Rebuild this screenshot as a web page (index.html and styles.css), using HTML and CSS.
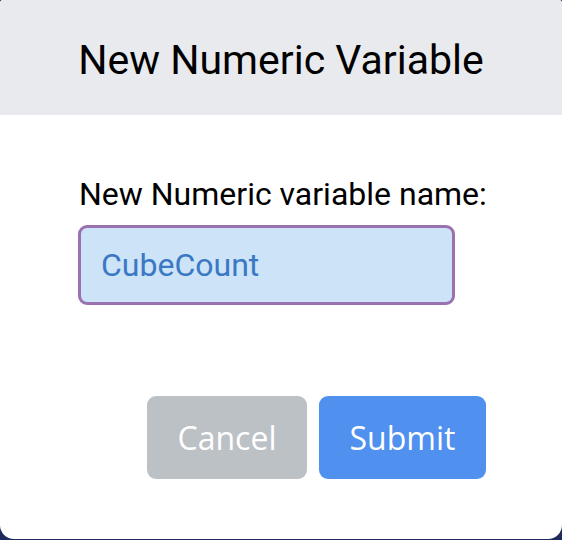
FILE: index.html
```html
<!DOCTYPE html>
<html>
<head>
<meta charset="utf-8">
<link rel="stylesheet" href="styles.css">
</head>
<body>
<div class="dialog">
  <div class="header"><h1 class="title">New Numeric Variable</h1></div>
  <div class="content">
    <label class="label" for="name">New Numeric variable name:</label>
    <input class="field" id="name" type="text" value="CubeCount">
    <div class="actions">
      <button class="btn btn-cancel">Cancel</button>
      <button class="btn btn-submit">Submit</button>
    </div>
  </div>
</div>
</body>
</html>
```

FILE: styles.css
```css
html, body {
  margin: 0;
  padding: 0;
  background: #1f2a5c;
  width: 562px;
  height: 540px;
  overflow: hidden;
}
.dialog {
  width: 562px;
  height: 539px;
  background: #ffffff;
  border-radius: 3px 3px 14px 14px;
  overflow: hidden;
  display: flex;
  flex-direction: column;
}
.header {
  height: 115px;
  background: #e9eaee;
  display: flex;
  align-items: center;
  justify-content: center;
}
.title {
  margin: 0;
  font-family: Roboto, "Liberation Sans", sans-serif;
  font-weight: 400;
  font-size: 41px;
  color: #000;
  padding-top: 4px;
}
.content {
  display: flex;
  flex-direction: column;
  padding: 59px 76px 0 78px;
}
.label {
  font-family: Roboto, "Liberation Sans", sans-serif;
  font-size: 32px;
  line-height: 40px;
  color: #000;
  padding-left: 1px;
  white-space: nowrap;
}
.field {
  margin-top: 11px;
  width: 377px;
  height: 80px;
  box-sizing: border-box;
  border: 3px solid #9b72b0;
  border-radius: 9px;
  background: #cce3f8;
  color: #3a78c4;
  font-family: Roboto, "Liberation Sans", sans-serif;
  font-size: 32px;
  padding: 0 0 0 20px;
  outline: none;
}
.actions {
  margin-top: 91px;
  display: flex;
  justify-content: flex-end;
  gap: 12px;
}
.btn {
  height: 83px;
  border: none;
  border-radius: 9px;
  color: #fff;
  font-family: "Open Sans", "Noto Sans", sans-serif;
  font-size: 32px;
  padding: 0;
}
.btn-cancel {
  width: 160px;
  background: #bcc1c6;
}
.btn-submit {
  width: 167px;
  background: #5090ee;
}
```
